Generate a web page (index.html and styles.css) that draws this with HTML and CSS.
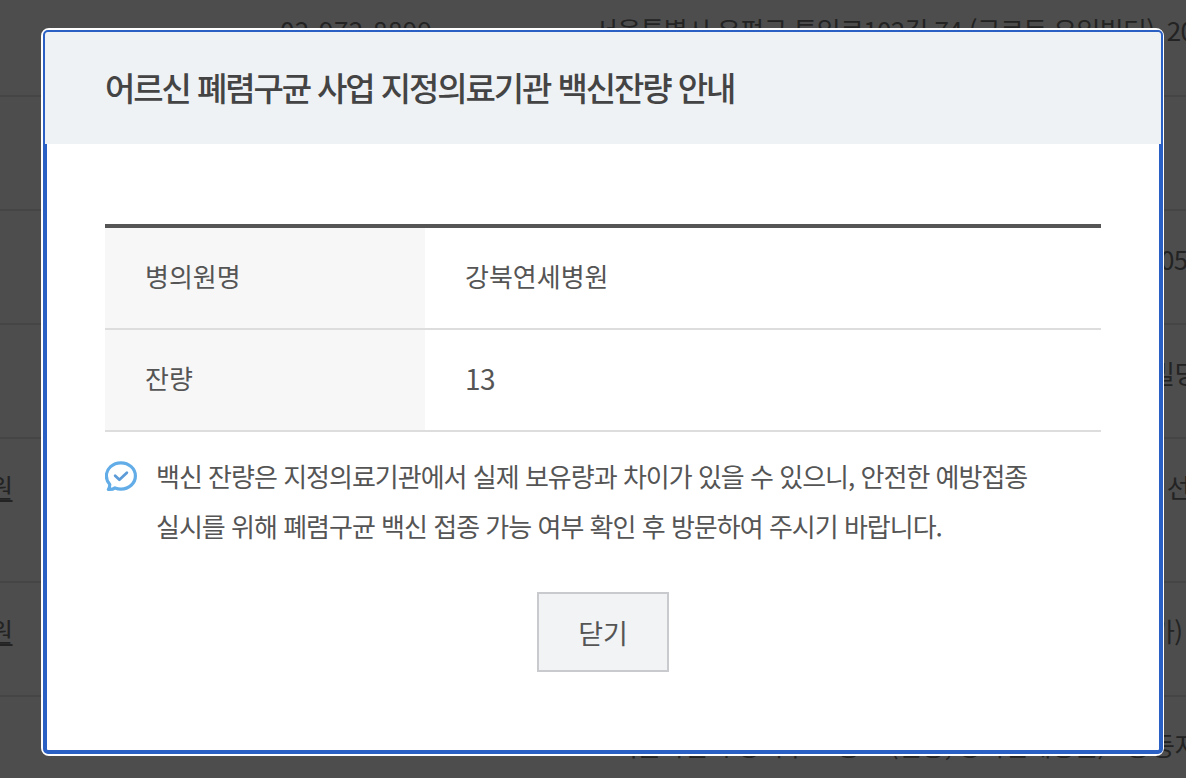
FILE: index.html
```html
<!DOCTYPE html>
<html lang="ko">
<head>
<meta charset="utf-8">
<title>어르신 폐렴구균 사업 지정의료기관 백신잔량 안내</title>
<link rel="stylesheet" href="styles.css">
</head>
<body>
<div class="list">
  <div class="row row-first"><span></span><span class="phone">02-972-8899</span><span class="addr">서울특별시 은평구 통일로102길 74 (구로동 유일빌딩)</span><span class="peek">&nbsp;20</span></div>
  <div class="row"></div>
  <div class="row"><span></span><span></span><span></span><span class="peek">05</span></div>
  <div class="row"><span></span><span></span><span></span><span class="peek peek-back">빌딩</span></div>
  <div class="row row-tall"><span class="name"><u>병원</u></span><span></span><span></span><span class="peek">&nbsp;선</span></div>
  <div class="row"><span class="name"><u>병원</u></span><span></span><span></span><span class="peek peek-back">가)</span></div>
  <div class="row"><span></span><span></span><span class="addr addr-low">서울특별시 강북구 도봉로 (번동, 강북연세병원) 1층</span><span class="peek peek-back">등지</span></div>
</div>
<div class="modal" role="dialog">
  <div class="frame">
    <header class="head"><h1 class="title">어르신 폐렴구균 사업 지정의료기관 백신잔량 안내</h1></header>
    <div class="body">
      <table class="info">
        <tr class="info-first"><th>병의원명</th><td>강북연세병원</td></tr>
        <tr><th>잔량</th><td class="count">13</td></tr>
      </table>
      <div class="notice">
        <svg class="icon" viewBox="1 2 30 29" width="32" height="31" aria-hidden="true">
          <path d="M4.2 28.6c2.6.2 4.7-.3 6.2-1.4 1.7.7 3.5 1.1 5.5 1.1 7.600 0 13.600-5.500 13.600-12.300S23.500 3.700 15.900 3.700 2.300 9.200 2.300 16c0 3 1.200 5.800 3.200 8-.1 1.900-.5 3.400-1.300 4.600z" fill="none" stroke="#62ade8" stroke-width="3" stroke-linejoin="round"/>
          <path d="M10.500 15.800l4 3.700 7-6.500" fill="none" stroke="#5b9bd8" stroke-width="2.600" stroke-linecap="round" stroke-linejoin="round"/>
        </svg>
        <p class="notice-text">백신 잔량은 지정의료기관에서 실제 보유량과 차이가 있을 수 있으니, 안전한 예방접종<br>실시를 위해 폐렴구균 백신 접종 가능 여부 확인 후 방문하여 주시기 바랍니다.</p>
      </div>
      <div class="actions"><button class="close" type="button">닫기</button></div>
    </div>
  </div>
</div>
</body>
</html>
```

FILE: styles.css
```css
* { box-sizing: border-box; }
html, body { margin: 0; padding: 0; }
body {
  width: 1186px;
  height: 778px;
  overflow: hidden;
  position: relative;
  background: #4d4d4d;
  font-family: "Noto Sans CJK KR", "Noto Sans", sans-serif;
  color: #555;
}
.list { width: 1186px; }
.row {
  display: grid;
  grid-template-columns: 280px 314px 566px 26px;
  height: 114px;
  padding-top: 35px;
  border-bottom: 2px solid #454545;
  font-size: 26px;
  line-height: 26px;
  color: #232323;
  white-space: nowrap;
  letter-spacing: -0.65px;
}
.row-first { height: 97px; padding-top: 17px; }
.row-tall { height: 144px; }
.row:last-child { border-bottom: 0; }
.name { margin-left: -34px; }
.phone { letter-spacing: 0.4px; }
.addr { overflow: hidden; }
.addr-low { padding-left: 20px; }
.peek { overflow: hidden; }
.peek-back { margin-left: -9px; }

.modal {
  position: absolute;
  left: 41px;
  top: 28px;
  width: 1123px;
  height: 728px;
  background: #fff;
  border: solid #fff;
  border-width: 2px 1px 2px 2px;
  border-radius: 8px;
}
.frame {
  height: 100%;
  border: solid #2a5fc4;
  border-width: 2px 4px 4px 4px;
  border-radius: 5px;
  background: #fff;
}
.head {
  margin: 0 -2px;
  height: 112px;
  background: #eef2f5;
  display: flex;
  align-items: center;
  padding: 0 0 3px 60px;
  border-radius: 3px 3px 0 0;
}
.title {
  margin: 0;
  font-size: 33px;
  font-weight: 500;
  letter-spacing: -2.1px;
  color: #444;
}
.body { padding: 80px 58px 0; }
.info {
  width: 100%;
  border-collapse: collapse;
  border-top: 4px solid #555;
  font-size: 26px;
  color: #555;
}
.info th, .info td {
  height: 102px;
  padding: 0 0 5px 40px;
  border-bottom: 2px solid #ddd;
  text-align: left;
  font-weight: 400;
}
.info .count { font-size: 28px; letter-spacing: -0.5px; }
.info-first th, .info-first td { height: 103px; }
.info th { width: 320px; background: #f7f7f7; }
.notice { display: flex; gap: 19px; margin-top: 19px; }
.icon { flex: none; margin-top: 10px; }
.notice-text {
  margin: 0;
  font-size: 26px;
  line-height: 50px;
  letter-spacing: -1px;
  color: #555;
}
.actions { display: flex; justify-content: center; margin-top: 41px; }
.close {
  width: 132px;
  height: 80px;
  border: 2px solid #c8cacd;
  background: #f2f3f5;
  font: inherit;
  font-size: 27px;
  color: #555;
  padding: 0;
}
```
